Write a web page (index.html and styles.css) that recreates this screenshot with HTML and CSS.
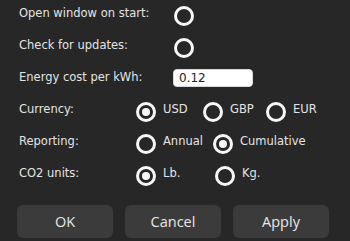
FILE: index.html
```html
<!DOCTYPE html>
<html>
<head>
<meta charset="utf-8">
<link rel="stylesheet" href="styles.css">
</head>
<body>
<div class="dialog">
  <div class="rows">
    <div class="row">
      <span class="label label-wide">Open window on start:</span>
      <span class="radio"></span>
    </div>
    <div class="row">
      <span class="label label-wide">Check for updates:</span>
      <span class="radio"></span>
    </div>
    <div class="row">
      <span class="label label-wide">Energy cost per kWh:</span>
      <input class="field" type="text" value="0.12">
    </div>
    <div class="row">
      <span class="label">Currency:</span>
      <div class="opts opts-currency">
        <span class="opt"><span class="radio checked"></span>USD</span>
        <span class="opt"><span class="radio"></span>GBP</span>
        <span class="opt"><span class="radio"></span>EUR</span>
      </div>
    </div>
    <div class="row">
      <span class="label">Reporting:</span>
      <div class="opts opts-reporting">
        <span class="opt"><span class="radio"></span>Annual</span>
        <span class="opt"><span class="radio checked"></span>Cumulative</span>
      </div>
    </div>
    <div class="row">
      <span class="label">CO2 units:</span>
      <div class="opts opts-units">
        <span class="opt"><span class="radio checked"></span>Lb.</span>
        <span class="opt"><span class="radio"></span>Kg.</span>
      </div>
    </div>
  </div>
  <div class="buttons">
    <button class="btn">OK</button>
    <button class="btn">Cancel</button>
    <button class="btn">Apply</button>
  </div>
</div>
</body>
</html>
```

FILE: styles.css
```css
html, body {
  margin: 0;
  padding: 0;
  background: #272727;
}
body {
  width: 350px;
  height: 241px;
  overflow: hidden;
  font-family: "DejaVu Sans", sans-serif;
  font-size: 11.5px;
  color: #e4e4e4;
}
.dialog {
  padding: 0 0 0 19px;
}
.rows {
  display: flex;
  flex-direction: column;
  gap: 6px;
}
.row {
  height: 26px;
  display: flex;
  align-items: center;
}
.label {
  width: 117px;
  flex: none;
  white-space: nowrap;
}
.label-wide {
  width: 155px;
}
.radio {
  box-sizing: border-box;
  width: 20px;
  height: 20px;
  border: 3px solid #f7f7f7;
  border-radius: 50%;
  flex: none;
  margin-top: 5px;
  display: flex;
  align-items: center;
  justify-content: center;
}
.radio.checked::after {
  content: "";
  width: 8px;
  height: 8px;
  border-radius: 50%;
  background: #f7f7f7;
}
.opts {
  display: grid;
  align-items: center;
}
.opts-currency {
  grid-template-columns: 67px 63px auto;
}
.opts-reporting {
  grid-template-columns: 77px auto;
}
.opts-units {
  grid-template-columns: 79px auto;
}
.opt {
  display: flex;
  align-items: center;
  gap: 7px;
  white-space: nowrap;
}
.field {
  box-sizing: border-box;
  width: 80px;
  height: 18px;
  margin: 2px 0 0 -1px;
  padding: 0 0 0 5px;
  border: 1px solid #d8d8d8;
  border-radius: 4px;
  background: #ffffff;
  color: #222222;
  font-family: "DejaVu Sans", sans-serif;
  font-size: 12px;
  outline: none;
}
.buttons {
  display: flex;
  gap: 12px;
  margin: 19px 0 0 -2px;
}
.btn {
  width: 96px;
  height: 33px;
  border: none;
  border-radius: 6px;
  background: #3b3b3b;
  color: #e8e8e8;
  font-family: "Open Sans", sans-serif;
  font-size: 14.5px;
  padding: 0;
}
```
